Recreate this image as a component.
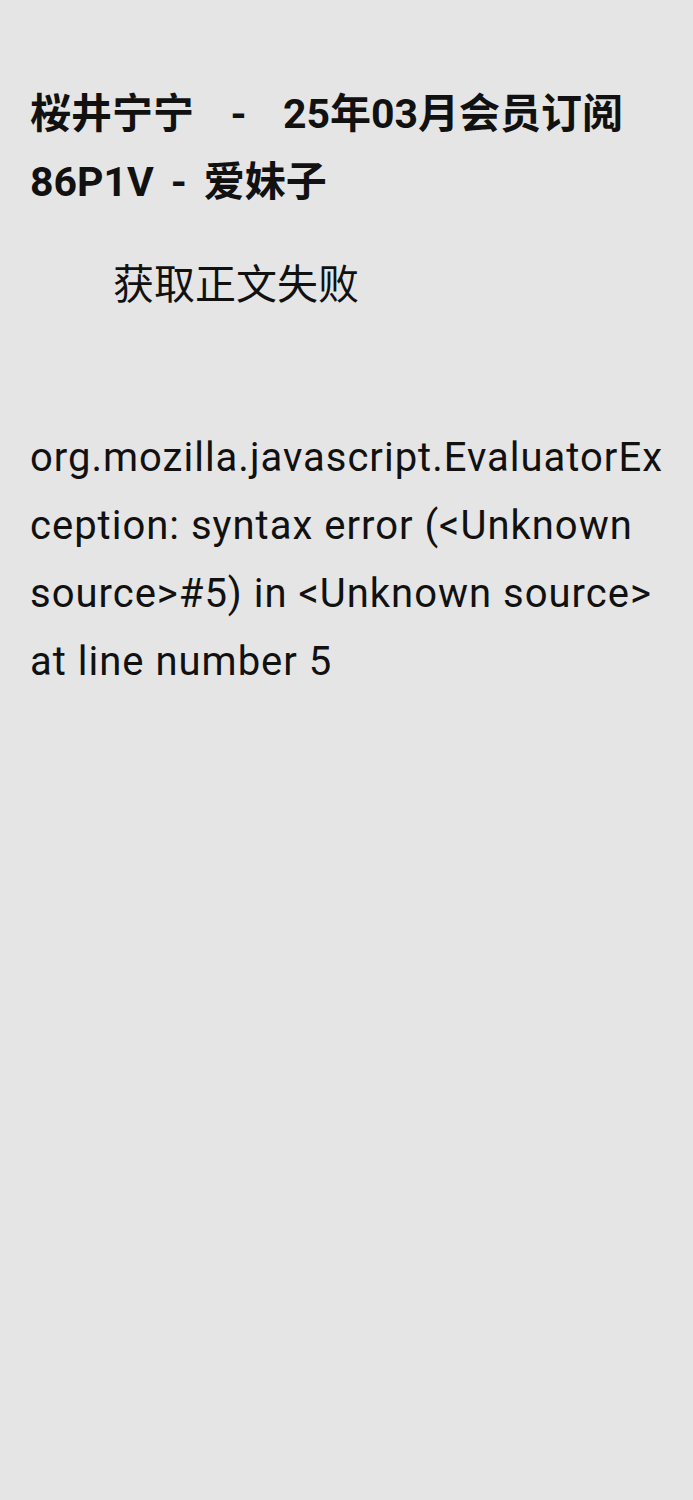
export default function App() {
  return (
    <div
      className="min-h-[1500px] w-full bg-[#e5e5e5] px-[30px] pt-[80px] text-[#111111]"
      style={{ fontFamily: 'Roboto, "Noto Sans CJK SC", sans-serif' }}
    >
      <h1 className="whitespace-nowrap text-[41px] font-bold leading-[68px]">
        桜井宁宁
        <span className="inline-block w-[89px] text-center"> - </span>
        25年03月会员订阅
        <br />
        86P1V
        <span className="inline-block w-[50px] text-center"> - </span>
        爱妹子
      </h1>
      <p className="mt-[35px] indent-[83px] text-[41px] leading-[68px]">获取正文失败</p>
      <p className="mt-[105px] text-[40px] leading-[68px] tracking-[1px]">
        org.mozilla.javascript.EvaluatorEx
        <br />
        ception: syntax error (&lt;Unknown
        <br />
        source&gt;#5) in &lt;Unknown source&gt;
        <br />
        at line number 5
      </p>
    </div>
  );
}
